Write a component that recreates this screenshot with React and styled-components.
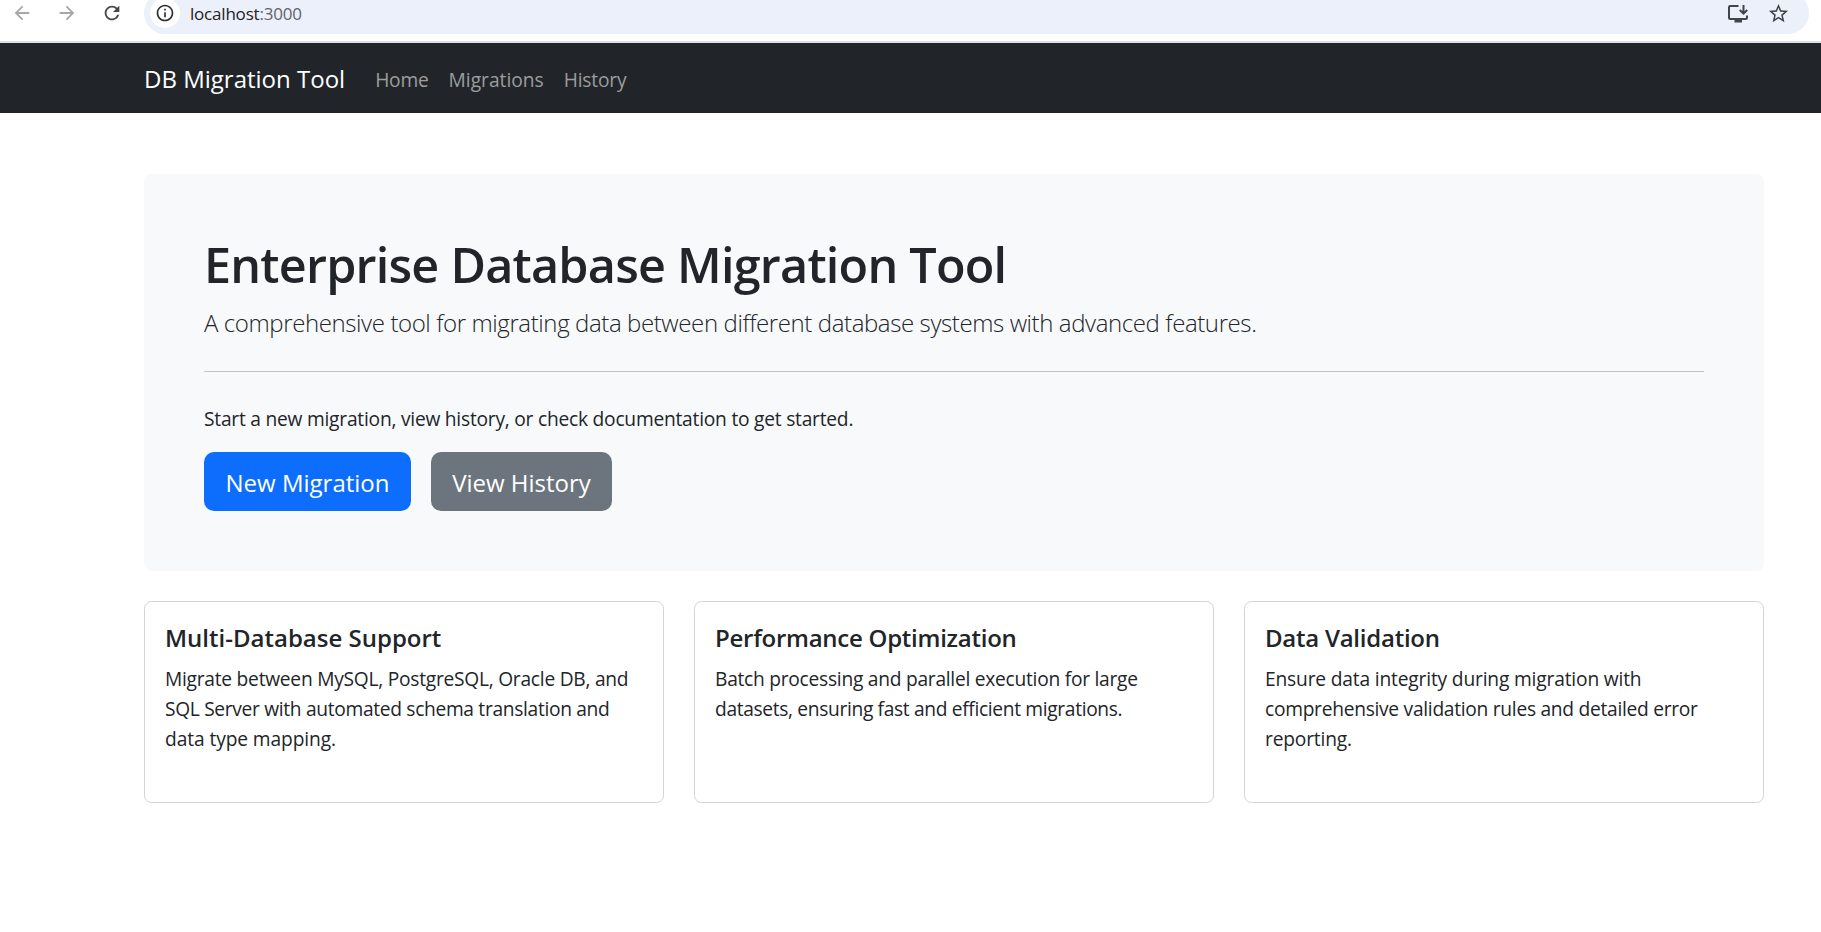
import React from "react";
import styled, { createGlobalStyle } from "styled-components";
import { MdArrowBack, MdArrowForward, MdRefresh, MdInfoOutline, MdStarBorder } from "react-icons/md";

const GlobalStyle = createGlobalStyle`
  *, *::before, *::after { box-sizing: border-box; }
  body {
    margin: 0;
    background: #fff;
    color: #212529;
    font-family: "Segoe UI", "Open Sans", "Noto Sans", sans-serif;
    font-size: 19.2px;
    line-height: 30px;
    overflow-x: hidden;
  }
  h1, h2, p { margin: 0; }
`;

const BrowserBar = styled.header`
  display: flex;
  align-items: flex-start;
  height: 43px;
  overflow: hidden;
  background: #fff;
  border-bottom: 2px solid #dfe2e4;
`;

const BrowserNav = styled.div`
  display: flex;
  flex: 0 0 144px;
  align-items: center;
  gap: 23px;
  height: 25px;
  padding-left: 11px;
`;

const BrowserIcon = styled.span`
  display: flex;
  color: ${({ $muted }) => ($muted ? "#a6a7a9" : "#44474a")};
`;

const AddressBar = styled.div`
  display: flex;
  flex: 1;
  align-items: center;
  height: 42px;
  margin: -8px 12px 0 0;
  padding: 0 19px 0 6px;
  border-radius: 21px;
  background: #ebf0fa;
`;

const SiteInfo = styled.span`
  display: flex;
  align-items: center;
  justify-content: center;
  width: 30px;
  height: 30px;
  border-radius: 50%;
  background: #fff;
  color: #2b2d30;
`;

const Url = styled.span`
  flex: 1;
  margin-left: 10px;
  padding-top: 2px;
  font-size: 17px;
  letter-spacing: -0.2px;
  color: #1f2023;
`;

const Port = styled.span`
  color: #5f6368;
`;

const AddressActions = styled.div`
  display: flex;
  align-items: center;
  gap: 18px;
  padding-top: 1px;
  color: #414549;
`;

const Navbar = styled.nav`
  display: flex;
  align-items: center;
  height: 70px;
  padding: 0 57px 0 144px;
  background: #212529;
`;

const Brand = styled.a`
  margin-right: 20px;
  padding-top: 2px;
  font-size: 24px;
  line-height: 37.5px;
  color: #fff;
`;

const NavLink = styled.a`
  padding: 13px 10px 9px;
  letter-spacing: ${({ $track = 0 }) => $track}px;
  color: #9b9d9f;
`;

const Page = styled.main`
  padding: 60.5px 57px 0 144px;
`;

const Hero = styled.section`
  padding: 60px;
  border-radius: 7.5px;
  background: #f8f9fb;
`;

const HeroTitle = styled.h1`
  margin-bottom: 10px;
  font-size: 48.5px;
  font-weight: 600;
  line-height: 60px;
  letter-spacing: -0.76px;
`;

const Lead = styled.p`
  font-size: 24px;
  font-weight: 300;
  line-height: 37.5px;
  letter-spacing: -0.395px;
`;

const Divider = styled.hr`
  height: 1px;
  margin: 30px 0;
  border: 0;
  background: #c3c5c7;
`;

const HeroText = styled.p`
  margin-bottom: 18px;
  padding-top: 2px;
  letter-spacing: -0.23px;
`;

const ButtonRow = styled.div`
  display: flex;
  gap: 20px;
`;

const Button = styled.button`
  height: 58.5px;
  width: ${({ $width }) => $width}px;
  padding: 2px 0 0;
  border: 0;
  border-radius: 10px;
  background: ${({ $primary }) => ($primary ? "#0d6efd" : "#6c757d")};
  color: #fff;
  font-family: inherit;
  font-size: 24px;
  line-height: 37.5px;
`;

const CardGrid = styled.section`
  display: grid;
  grid-template-columns: repeat(3, 1fr);
  gap: 30px;
  margin-top: 30px;
`;

const Card = styled.article`
  height: 202px;
  padding: 21px 20px 20px;
  border: 1px solid #d3d4d5;
  border-radius: 7.5px;
  background: #fff;
`;

const CardTitle = styled.h2`
  margin-bottom: 11px;
  font-size: 24px;
  font-weight: 600;
  line-height: 30px;
  letter-spacing: ${({ $track }) => $track}px;
`;

const CardLine = styled.span`
  display: block;
  white-space: nowrap;
  letter-spacing: ${({ $track }) => $track}px;
`;

const features = [
  {
    title: "Multi-Database Support",
    track: 0,
    lines: [
      ["Migrate between MySQL, PostgreSQL, Oracle DB, and", -0.25],
      ["SQL Server with automated schema translation and", -0.32],
      ["data type mapping.", -0.1],
    ],
  },
  {
    title: "Performance Optimization",
    track: -0.26,
    lines: [
      ["Batch processing and parallel execution for large", -0.26],
      ["datasets, ensuring fast and efficient migrations.", -0.34],
    ],
  },
  {
    title: "Data Validation",
    track: -0.24,
    lines: [
      ["Ensure data integrity during migration with", -0.17],
      ["comprehensive validation rules and detailed error", -0.28],
      ["reporting.", -0.18],
    ],
  },
];

function InstallIcon() {
  return (
    <svg width="22" height="20" viewBox="0 0 22 20" fill="none" stroke="currentColor" strokeWidth="2">
      <path d="M11.5 2H3.2Q2 2 2 3.2V13.8Q2 15 3.2 15H18.8Q20 15 20 13.8V11.5" />
      <path d="M7.5 17h7.5" strokeWidth="3" />
      <path d="M16.5 1v8.5M12.8 6l3.7 3.7L20.2 6" />
    </svg>
  );
}

export default function App() {
  return (
    <>
      <GlobalStyle />
      <BrowserBar>
        <BrowserNav>
          <BrowserIcon $muted><MdArrowBack size={22} /></BrowserIcon>
          <BrowserIcon $muted><MdArrowForward size={22} /></BrowserIcon>
          <BrowserIcon><MdRefresh size={22} /></BrowserIcon>
        </BrowserNav>
        <AddressBar>
          <SiteInfo><MdInfoOutline size={20} /></SiteInfo>
          <Url>localhost<Port>:3000</Port></Url>
          <AddressActions>
            <InstallIcon />
            <MdStarBorder size={23} />
          </AddressActions>
        </AddressBar>
      </BrowserBar>
      <Navbar>
        <Brand>DB Migration Tool</Brand>
        <NavLink $track={-0.2}>Home</NavLink>
        <NavLink>Migrations</NavLink>
        <NavLink $track={-0.2}>History</NavLink>
      </Navbar>
      <Page>
        <Hero>
          <HeroTitle>Enterprise Database Migration Tool</HeroTitle>
          <Lead>A comprehensive tool for migrating data between different database systems with advanced features.</Lead>
          <Divider />
          <HeroText>Start a new migration, view history, or check documentation to get started.</HeroText>
          <ButtonRow>
            <Button $primary $width={207}>New Migration</Button>
            <Button $width={181}>View History</Button>
          </ButtonRow>
        </Hero>
        <CardGrid>
          {features.map(({ title, track, lines }) => (
            <Card key={title}>
              <CardTitle $track={track}>{title}</CardTitle>
              <p>
                {lines.map(([text, spacing]) => (
                  <CardLine key={text} $track={spacing}>{text}</CardLine>
                ))}
              </p>
            </Card>
          ))}
        </CardGrid>
      </Page>
    </>
  );
}
